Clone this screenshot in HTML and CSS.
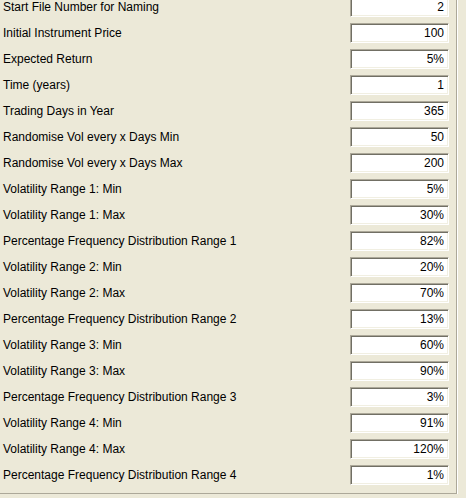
FILE: index.html
```html
<!DOCTYPE html>
<html lang="en">
<head>
  <meta charset="UTF-8" />
  <title>Simulation Parameters</title>
  <link rel="stylesheet" href="styles.css">
</head>
<body>
<form class="panel">
  <div class="row"><label>Start File Number for Naming</label><input class="field" value="2"></div>
  <div class="row"><label>Initial Instrument Price</label><input class="field" value="100"></div>
  <div class="row"><label>Expected Return</label><input class="field" value="5%"></div>
  <div class="row"><label>Time (years)</label><input class="field" value="1"></div>
  <div class="row"><label>Trading Days in Year</label><input class="field" value="365"></div>
  <div class="row"><label>Randomise Vol every x Days Min</label><input class="field" value="50"></div>
  <div class="row"><label>Randomise Vol every x Days Max</label><input class="field" value="200"></div>
  <div class="row"><label>Volatility Range 1: Min</label><input class="field" value="5%"></div>
  <div class="row"><label>Volatility Range 1: Max</label><input class="field" value="30%"></div>
  <div class="row"><label>Percentage Frequency Distribution Range 1</label><input class="field" value="82%"></div>
  <div class="row"><label>Volatility Range 2: Min</label><input class="field" value="20%"></div>
  <div class="row"><label>Volatility Range 2: Max</label><input class="field" value="70%"></div>
  <div class="row"><label>Percentage Frequency Distribution Range 2</label><input class="field" value="13%"></div>
  <div class="row"><label>Volatility Range 3: Min</label><input class="field" value="60%"></div>
  <div class="row"><label>Volatility Range 3: Max</label><input class="field" value="90%"></div>
  <div class="row"><label>Percentage Frequency Distribution Range 3</label><input class="field" value="3%"></div>
  <div class="row"><label>Volatility Range 4: Min</label><input class="field" value="91%"></div>
  <div class="row"><label>Volatility Range 4: Max</label><input class="field" value="120%"></div>
  <div class="row"><label>Percentage Frequency Distribution Range 4</label><input class="field" value="1%"></div>
</form>
</body>
</html>
```

FILE: styles.css
```css
body {
  margin: 0;
  background-color: #ece9d8;
  font-family: "Liberation Sans", Arial, sans-serif;
  font-size: 12px;
  color: #000;
}
.panel {
  width: 457px;
  box-sizing: border-box;
  margin: -3px 0 0 0;
  padding: 0 7px 8px 0;
  border-right: 1px solid #aca899;
  border-bottom: 1px solid #aca899;
  box-shadow: 1px 1px 0 #fff;
}
.row {
  display: flex;
  align-items: center;
  height: 20px;
  margin-bottom: 6px;
}
.row:last-child {
  margin-bottom: 0;
}
.row label {
  flex: 1;
  padding-left: 3px;
}
.field {
  width: 99px;
  height: 20px;
  box-sizing: border-box;
  margin: 0;
  padding: 0 4px 0 0;
  border: 1px solid;
  border-color: #aca899 #fff #fff #aca899;
  box-shadow: inset 1px 1px #716f64, inset -1px -1px #f1efe2;
  background: #fff;
  font-family: "Liberation Sans", Arial, sans-serif;
  font-size: 12px;
  color: #000;
  text-align: right;
  outline: none;
}
```
